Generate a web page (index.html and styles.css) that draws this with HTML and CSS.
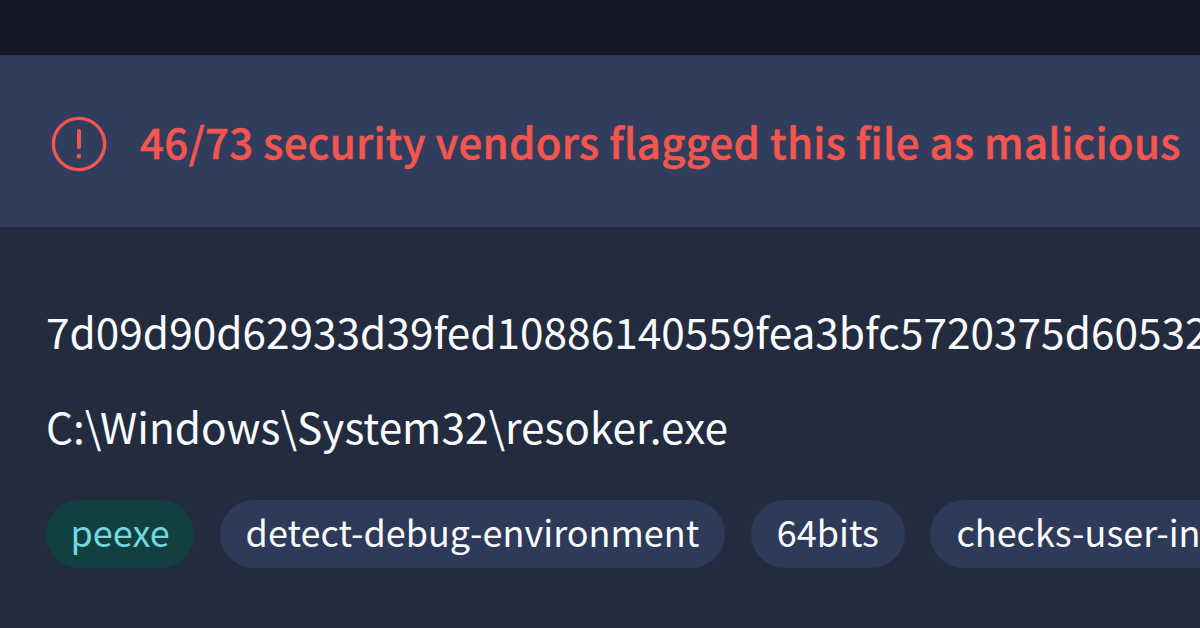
FILE: index.html
```html
<!DOCTYPE html>
<html lang="en">
<head>
  <meta charset="UTF-8">
  <title>File report</title>
  <link rel="stylesheet" href="styles.css">
</head>
<body>

<div class="topbar"></div>

<div class="alert">
  <svg class="alert-icon" viewBox="0 0 56 56" width="56" height="56" fill="none" stroke="#f2564f" stroke-width="3.4" stroke-linecap="round">
    <circle cx="28" cy="28" r="25.6"/>
    <line x1="28" y1="15" x2="28" y2="31" stroke-width="4"/>
    <line x1="28" y1="40" x2="28" y2="40.4" stroke-width="4.4"/>
  </svg>
  <span class="alert-text">46/73 security vendors flagged this file as malicious</span>
</div>

<div class="details">
  <div class="hash">7d09d90d62933d39fed10886140559fea3bfc5720375d60532</div>
  <div class="path">C:\Windows\System32\resoker.exe</div>
  <div class="tags">
    <span class="tag tag-green">peexe</span>
    <span class="tag">detect-debug-environment</span>
    <span class="tag">64bits</span>
    <span class="tag">checks-user-input</span>
  </div>
</div>

</body>
</html>
```

FILE: styles.css
```css
html, body {
  margin: 0;
  height: 628px;
  overflow: hidden;
}

body {
  font-family: "Noto Sans CJK JP", "Noto Sans", sans-serif;
  background: #232c3e;
  color: #f9fafb;
  display: flex;
  flex-direction: column;
}

.topbar {
  height: 55px;
  background: #151726;
}

.alert {
  height: 172px;
  background: #303d5c;
  display: flex;
  align-items: center;
  gap: 33px;
  padding-left: 51px;
}

.alert-icon {
  flex-shrink: 0;
  margin-top: 6px;
}

/* no semibold cut installed, so thicken the medium one */
.alert-text {
  font-size: 42px;
  line-height: 58px;
  font-weight: 500;
  letter-spacing: 0.27px;
  -webkit-text-stroke: 0.5px #f2564f;
  color: #f2564f;
  white-space: nowrap;
}

.details {
  padding: 75px 0 0 46px;
  white-space: nowrap;
}

.hash {
  font-size: 42.4px;
  line-height: 58px;
}

.path {
  font-size: 42.4px;
  line-height: 58px;
  margin-top: 37px;
}

.tags {
  display: flex;
  gap: 25.5px;
  margin-top: 45px;
}

.tag {
  font-size: 36px;
  line-height: 62px;
  padding: 0 26px 6px;
  border-radius: 34px;
  background: #2e3a59;
  flex-shrink: 0;
}

.tag-green {
  padding: 0 24.5px 6px;
  background: #123f40;
  color: #74d7dd;
}
```
